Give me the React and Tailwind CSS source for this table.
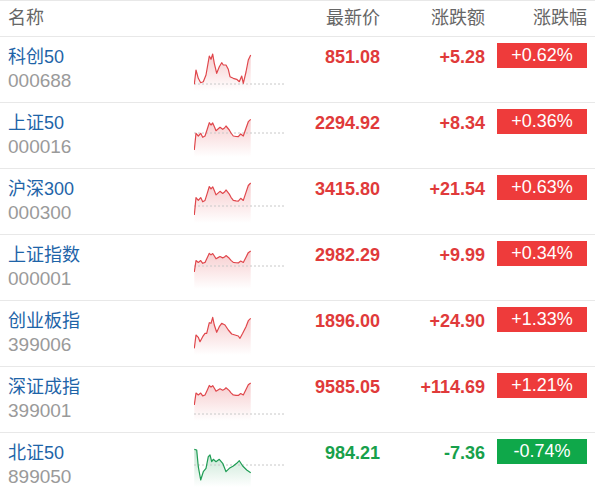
import React from "react";

// 行情列表 - sparkline data is in svg coords (viewBox 0 0 92 44)
const shapeA = [
  [0.3, 37], [2, 20.3], [4.3, 23], [6.7, 20.3], [8.7, 24.3], [11, 23], [13, 17],
  [15.3, 9.7], [17, 12], [18.7, 10], [20.5, 14], [22, 17.7], [24, 16], [26, 14.3],
  [28.7, 16.3], [30.5, 15], [32, 13], [35.3, 17], [37, 20], [39.3, 23], [42, 23.5],
  [44.3, 23.7], [46.7, 21], [49.3, 23], [52, 15.3], [54.3, 8.7], [56.7, 6.3],
];

// squeeze shapeA into a new vertical range
const remap = (pts, top, bottom) =>
  pts.map(([x, y]) => [x, top + ((y - 6.3) * (bottom - top)) / (37 - 6.3)]);

const rows = [
  {
    name: "科创50", code: "000688", price: "851.08", chg: "+5.28", pct: "+0.62%", up: true,
    base: 37,
    pts: [
      [0.3, 37.3], [2, 23], [4.3, 31.3], [6.7, 35.7], [9.3, 34.7], [12, 28], [15.3, 9],
      [17, 12.3], [18.7, 7], [20.3, 16.3], [22.7, 26.3], [25.3, 19.7], [27.7, 15.7],
      [29.3, 18], [32, 18], [34.3, 22.3], [36, 29.7], [39.3, 31.3], [42.7, 32.3],
      [45.3, 34.7], [47.7, 29], [49.3, 36.3], [52, 25], [54.3, 13], [56.7, 8],
    ],
  },
  { name: "上证50", code: "000016", price: "2294.92", chg: "+8.34", pct: "+0.36%", up: true, base: 20, pts: shapeA },
  { name: "沪深300", code: "000300", price: "3415.80", chg: "+21.54", pct: "+0.63%", up: true, base: 27, pts: remap(shapeA, 4, 36) },
  { name: "上证指数", code: "000001", price: "2982.29", chg: "+9.99", pct: "+0.34%", up: true, base: 21, pts: remap(shapeA, 6, 27) },
  {
    name: "创业板指", code: "399006", price: "1896.00", chg: "+24.90", pct: "+1.33%", up: true,
    base: null,
    pts: [
      [0.3, 37.3], [2, 24], [4.3, 26.3], [6, 30.7], [8.7, 25.7], [11, 22.3], [12.7, 22.3],
      [15.3, 11.7], [17, 12.3], [18.7, 6.3], [20.3, 14], [22.7, 21.3], [25.3, 15.7],
      [27.7, 12.3], [31, 14], [34.3, 19], [37.7, 23], [41, 24], [44.3, 25], [46, 27.3],
      [48.7, 22.3], [52, 15.7], [54.3, 9.7], [56.7, 7.3],
    ],
  },
  { name: "深证成指", code: "399001", price: "9585.05", chg: "+114.69", pct: "+1.21%", up: true, base: 37, pts: remap(shapeA, 6, 28) },
  {
    name: "北证50", code: "899050", price: "984.21", chg: "-7.36", pct: "-0.74%", up: false,
    base: 22,
    pts: [
      [0.3, 6.3], [2.7, 7], [4.3, 23.7], [6.7, 37], [9.3, 28.7], [12, 25.3], [14.3, 13.7],
      [16, 12], [17.7, 18.7], [19.3, 16.3], [22, 18.7], [25.3, 16.3], [28.7, 20.3],
      [32, 28.7], [35.3, 25.3], [39.3, 23], [42.7, 20.3], [45.3, 17.7], [48.7, 23],
      [52.7, 27], [56.7, 29.7],
    ],
  },
];

function Sparkline({ pts, base, up, id }) {
  const color = up ? "#e0474c" : "#1f9d55";
  const line = pts.map(([x, y]) => `${x},${y}`).join(" ");
  const last = pts[pts.length - 1][0];
  const area = `${pts[0][0]},44 ${line} ${last},44`;
  return (
    <svg width="92" height="44" viewBox="0 0 92 44" className="block">
      <defs>
        <linearGradient id={id} x1="0" y1="0" x2="0" y2="1">
          <stop offset="0%" stopColor={color} stopOpacity="0.28" />
          <stop offset="100%" stopColor={color} stopOpacity="0" />
        </linearGradient>
      </defs>
      <polygon points={area} fill={`url(#${id})`} />
      {base !== null && (
        <line x1="0" y1={base} x2="92" y2={base} stroke="#c8c8c8" strokeWidth="1" strokeDasharray="2 2" />
      )}
      <polyline points={line} fill="none" stroke={color} strokeWidth="1.2" strokeLinejoin="round" />
    </svg>
  );
}

export default function App() {
  return (
    <div className="w-[595px] h-[498px] overflow-hidden bg-white font-['Liberation_Sans','Noto_Sans_CJK_SC',sans-serif]">
      {/* header */}
      <div className="flex items-center h-[37px] px-2 border-t border-b border-[#e8e8e8] text-[18px] text-[#666]">
        <div className="w-[186px]">名称</div>
        <div className="w-[92px]" />
        <div className="w-[94px] text-right">最新价</div>
        <div className="w-[105px] text-right">涨跌额</div>
        <div className="w-[102px] text-right">涨跌幅</div>
      </div>

      {rows.map((r, i) => {
        const txt = r.up ? "text-[#e03a3a]" : "text-[#17a04b]";
        const badge = r.up ? "bg-[#ee3b3b]" : "bg-[#0fa84a]";
        return (
          <div key={r.code} className="flex items-start h-[66px] px-2 border-b border-[#e8e8e8]">
            <div className="w-[186px] pt-2 leading-6">
              <div className="text-[18px] text-[#1e64a8]">{r.name}</div>
              <div className="text-[19px] text-[#9a9a9a]">{r.code}</div>
            </div>
            <div className="w-[92px] pt-[10px]">
              <Sparkline pts={r.pts} base={r.base} up={r.up} id={`g${i}`} />
            </div>
            <div className={`w-[94px] pt-2 leading-6 text-right text-[18px] font-bold ${txt}`}>{r.price}</div>
            <div className={`w-[105px] pt-2 leading-6 text-right text-[18px] font-bold ${txt}`}>{r.chg}</div>
            <div className="ml-3 mt-[6px]">
              <div className={`w-[90px] h-[25px] flex items-center justify-center text-[18px] text-white ${badge}`}>
                {r.pct}
              </div>
            </div>
          </div>
        );
      })}
    </div>
  );
}
